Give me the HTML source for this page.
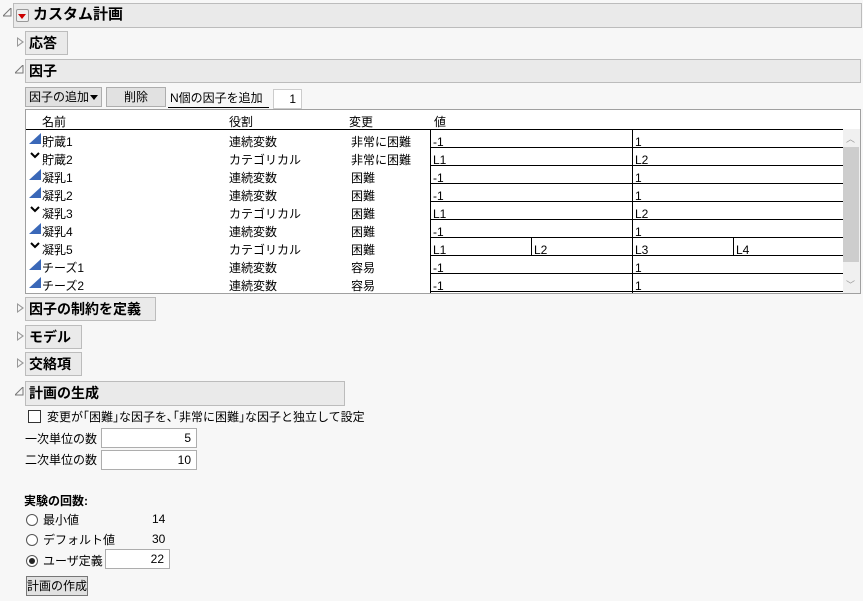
<!DOCTYPE html>
<html><head><meta charset="utf-8"><style>
*{margin:0;padding:0;box-sizing:border-box}
body{width:863px;height:601px;background:#f7f7f7;font-family:"Liberation Sans","Noto Sans CJK JP",sans-serif;font-size:12px;line-height:14px;color:#000;position:relative;overflow:hidden}
.a{position:absolute;white-space:nowrap}
.hd{position:absolute;background:#eaeaea;border:1px solid #bcbcbc;font-weight:bold;font-size:14px;line-height:22px;padding-left:3px}
.tri{position:absolute;width:0;height:0;border-top:5px solid transparent;border-bottom:5px solid transparent;border-left:7px solid #999}
.tri:after{content:"";position:absolute;left:-6px;top:-3px;border-top:3px solid transparent;border-bottom:3px solid transparent;border-left:4px solid #f7f7f7}
.open{position:absolute;width:9px;height:9px}
.btn{position:absolute;background:#e1e1e1;border:1px solid #adadad;text-align:center;line-height:18px}
.inp{position:absolute;background:#fff;border:1px solid #adadad;text-align:right;padding-right:5px;line-height:18px}
.hl{position:absolute;height:1px;background:#000}
.vl{position:absolute;width:1px;background:#000}
.cont{position:absolute;width:0;height:0;border-left:12px solid transparent;border-bottom:11px solid #3a68b8}
.rad{position:absolute;width:12px;height:12px;border:1px solid #555;border-radius:50%;background:#fff}
</style></head><body>
<svg class="open" style="left:3px;top:8px" viewBox="0 0 9 9"><path d="M8 0 L8 8 L0 8 Z" fill="none" stroke="#777"/></svg>
<div class="hd" style="left:13px;top:3px;width:849px;height:25px;padding-left:19px;font-size:15px">カスタム計画</div>
<div class="a" style="left:16px;top:9px;width:13px;height:13px;border:1px solid #999;background:#f0f0f0;border-radius:2px"></div>
<div class="a" style="left:18px;top:14px;border-left:4px solid transparent;border-right:4px solid transparent;border-top:5px solid #c00"></div>

<div class="tri" style="left:17px;top:37px"></div>
<div class="hd" style="left:25px;top:31px;width:43px;height:24px">応答</div>

<svg class="open" style="left:15px;top:65px" viewBox="0 0 9 9"><path d="M8 0 L8 8 L0 8 Z" fill="none" stroke="#777"/></svg>
<div class="hd" style="left:25px;top:59px;width:836px;height:24px">因子</div>

<div class="btn" style="left:25px;top:87px;width:77px;text-align:left;padding-left:3px">因子の追加</div>
<div class="a" style="left:90px;top:95px;border-left:4px solid transparent;border-right:4px solid transparent;border-top:5px solid #000"></div>
<div class="btn" style="left:106px;top:87px;width:60px">削除</div>
<div class="a" style="left:170px;top:91px">N個の因子を追加</div>
<div class="hl" style="left:168px;top:107px;width:101px;background:#000"></div>
<div class="inp" style="left:273px;top:89px;width:29px;border-color:#ccc">1</div>

<div class="a" style="left:25px;top:109px;width:836px;height:185px;border:1px solid #a0a0a0;background:#fff"></div>
<div class="a" style="left:843px;top:129px;width:17px;height:164px;background:#f0f0f0"></div>
<div class="a" style="left:843px;top:147px;width:16px;height:115px;background:#cdcdcd"></div>
<div class="a" style="left:846px;top:132px;font-size:9px;color:#999">︿</div>
<div class="a" style="left:846px;top:278px;font-size:9px;color:#999">﹀</div>

<div class="a" style="left:42px;top:115px">名前</div>
<div class="a" style="left:229px;top:115px">役割</div>
<div class="a" style="left:349px;top:115px">変更</div>
<div class="a" style="left:434px;top:115px">値</div>
<div class="hl" style="left:26px;top:129px;width:817px"></div>
<div class="vl" style="left:430px;top:129px;height:164px"></div>
<div class="vl" style="left:632px;top:129px;height:164px"></div>
<div class="vl" style="left:531px;top:237px;height:18px"></div>
<div class="vl" style="left:733px;top:237px;height:18px"></div>

<div id="rows"></div>
<script>
var d=[["貯蔵1","連続変数","非常に困難",["-1","1"]],["貯蔵2","カテゴリカル","非常に困難",["L1","L2"]],["凝乳1","連続変数","困難",["-1","1"]],["凝乳2","連続変数","困難",["-1","1"]],["凝乳3","カテゴリカル","困難",["L1","L2"]],["凝乳4","連続変数","困難",["-1","1"]],["凝乳5","カテゴリカル","困難",["L1","L2","L3","L4"]],["チーズ1","連続変数","容易",["-1","1"]],["チーズ2","連続変数","容易",["-1","1"]]];
var h="";
d.forEach(function(r,i){var y=129+18*i;
var c=r[1]=="連続変数";
h+=c?'<div class="cont" style="left:29px;top:'+(y+4)+'px"></div>':'<svg class="a" style="left:30px;top:'+(y+5)+'px" width="10" height="7"><path d="M1 1 L5 5 L9 1" fill="none" stroke="#000" stroke-width="2"/></svg>';
h+='<div class="a" style="left:42px;top:'+(y+6)+'px">'+r[0]+'</div><div class="a" style="left:229px;top:'+(y+6)+'px">'+r[1]+'</div><div class="a" style="left:351px;top:'+(y+6)+'px">'+r[2]+'</div>';
var xs=r[3].length==2?[433,635]:[433,534,635,736];
r[3].forEach(function(v,k){h+='<div class="a" style="left:'+xs[k]+'px;top:'+(y+6)+'px">'+v+'</div>'});
h+='<div class="hl" style="left:430px;top:'+(y+18)+'px;width:413px"></div>';
});
document.getElementById("rows").innerHTML=h;
</script>

<div class="tri" style="left:17px;top:303px"></div>
<div class="hd" style="left:25px;top:297px;width:131px;height:24px">因子の制約を定義</div>
<div class="tri" style="left:17px;top:331px"></div>
<div class="hd" style="left:25px;top:325px;width:57px;height:24px">モデル</div>
<div class="tri" style="left:17px;top:358px"></div>
<div class="hd" style="left:25px;top:352px;width:57px;height:24px">交絡項</div>

<svg class="open" style="left:15px;top:387px" viewBox="0 0 9 9"><path d="M8 0 L8 8 L0 8 Z" fill="none" stroke="#777"/></svg>
<div class="hd" style="left:25px;top:381px;width:320px;height:25px">計画の生成</div>

<div class="a" style="left:28px;top:410px;width:13px;height:13px;border:1px solid #333;background:#fff"></div>
<div class="a" style="left:47px;top:410px">変更が｢困難｣な因子を､｢非常に困難｣な因子と独立して設定</div>
<div class="a" style="left:25px;top:432px">一次単位の数</div>
<div class="inp" style="left:101px;top:428px;width:96px">5</div>
<div class="a" style="left:25px;top:453px">二次単位の数</div>
<div class="inp" style="left:101px;top:450px;width:96px">10</div>

<div class="a" style="left:24px;top:494px;font-weight:bold">実験の回数:</div>
<div class="rad" style="left:26px;top:514px"></div>
<div class="a" style="left:43px;top:513px">最小値</div>
<div class="a" style="left:152px;top:512px">14</div>
<div class="rad" style="left:26px;top:534px"></div>
<div class="a" style="left:43px;top:533px">デフォルト値</div>
<div class="a" style="left:152px;top:532px">30</div>
<div class="rad" style="left:26px;top:555px"></div>
<div class="a" style="left:29px;top:558px;width:6px;height:6px;border-radius:50%;background:#222"></div>
<div class="a" style="left:43px;top:554px">ユーザ定義</div>
<div class="inp" style="left:105px;top:549px;width:65px">22</div>
<div class="btn" style="left:26px;top:576px;width:62px;border-color:#777">計画の作成</div>
</body></html>
